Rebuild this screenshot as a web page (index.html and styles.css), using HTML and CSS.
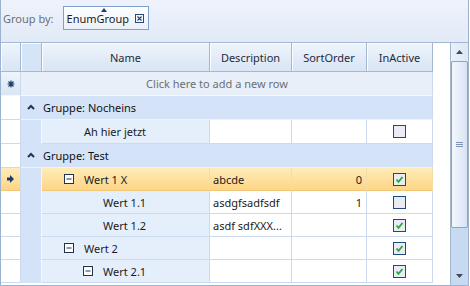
FILE: index.html
```html
<!DOCTYPE html>
<html lang="de">
<head>
  <meta charset="UTF-8">
  <title>Grid</title>
  <link rel="stylesheet" href="styles.css">
</head>
<body>
  <div class="grid-view">
    <!-- Group by Leiste -->
    <div class="group-panel">
      <span class="group-label">Group by:</span>
      <div class="group-chip">
        <svg class="sort-arrow" width="6" height="4" viewBox="0 0 6 4"><polygon points="0,4 3,0 6,4" fill="#1d3d6e"/></svg>
        <span>EnumGroup</span>
        <svg class="chip-close" width="9" height="9" viewBox="0 0 9 9">
          <rect x="0.5" y="0.5" width="8" height="8" fill="#f4f7fb" stroke="#2b4870"/>
          <path d="M2.5 2.5 L6.5 6.5 M6.5 2.5 L2.5 6.5" stroke="#2b4870" stroke-width="1.2"/>
        </svg>
      </div>
    </div>

    <div class="grid-body">
      <div class="rows">
        <div class="row header-row">
          <div class="cell ind"></div>
          <div class="cell indent"></div>
          <div class="cell">Name</div>
          <div class="cell">Description</div>
          <div class="cell">SortOrder</div>
          <div class="cell">InActive</div>
          <div class="cell filler"></div>
        </div>

        <div class="row new-row">
          <div class="cell ind">
            <svg width="8" height="8" viewBox="0 0 8 8"><path d="M4 0.5 V7.5 M0.5 4 H7.5 M1.5 1.5 L6.5 6.5 M6.5 1.5 L1.5 6.5" stroke="#1d3d6e" stroke-width="1.2"/></svg>
          </div>
          <div class="cell new-text">Click here to add a new row</div>
          <div class="cell filler"></div>
        </div>

        <div class="row group-row">
          <div class="cell ind"></div>
          <div class="cell indent"><svg class="caret" width="8" height="6" viewBox="0 0 8 6"><path d="M1 5 L4 2 L7 5" fill="none" stroke="#1d3557" stroke-width="2"/></svg></div>
          <div class="cell group-title">Gruppe: Nocheins</div>
          <div class="cell filler"></div>
        </div>

        <div class="row data-row">
          <div class="cell ind"></div>
          <div class="cell indent"></div>
          <div class="cell name lvl1"><span class="leaf">Ah hier jetzt</span></div>
          <div class="cell desc"></div>
          <div class="cell sort"></div>
          <div class="cell check"><svg class="box" width="13" height="13" viewBox="0 0 13 13"><rect x="0.5" y="0.5" width="12" height="12" fill="#e9ecf2" stroke="#1f4a7c"/></svg></div>
          <div class="cell filler"></div>
        </div>

        <div class="row group-row">
          <div class="cell ind"></div>
          <div class="cell indent"><svg class="caret" width="8" height="6" viewBox="0 0 8 6"><path d="M1 5 L4 2 L7 5" fill="none" stroke="#1d3557" stroke-width="2"/></svg></div>
          <div class="cell group-title">Gruppe: Test</div>
          <div class="cell filler"></div>
        </div>

        <div class="row data-row short selected">
          <div class="cell ind">
            <svg width="7" height="8" viewBox="0 0 7 8"><polygon points="0,2.5 3,2.5 3,0 7,4 3,8 3,5.5 0,5.5" fill="#1b3b6d"/></svg>
          </div>
          <div class="cell indent"></div>
          <div class="cell name lvl1"><svg class="expander" width="10" height="10" viewBox="0 0 10 10"><rect x="0.5" y="0.5" width="9" height="9" fill="#fdfdfd" stroke="#22344d"/><path d="M2.5 5 H7.5" stroke="#22344d"/></svg>Wert 1 X</div>
          <div class="cell desc">abcde</div>
          <div class="cell sort">0</div>
          <div class="cell check"><svg class="box" width="13" height="13" viewBox="0 0 13 13"><rect x="0.5" y="0.5" width="12" height="12" fill="#e9ecf2" stroke="#1f4a7c"/><path d="M3.5 6.5 L5.5 8.8 L9.5 4" fill="none" stroke="#2aa63a" stroke-width="1.8"/></svg></div>
          <div class="cell filler"></div>
        </div>

        <div class="row data-row short">
          <div class="cell ind"></div>
          <div class="cell indent"></div>
          <div class="cell name lvl2"><span class="leaf">Wert 1.1</span></div>
          <div class="cell desc">asdgfsadfsdf</div>
          <div class="cell sort">1</div>
          <div class="cell check"><svg class="box" width="13" height="13" viewBox="0 0 13 13"><rect x="0.5" y="0.5" width="12" height="12" fill="#e9ecf2" stroke="#1f4a7c"/></svg></div>
          <div class="cell filler"></div>
        </div>

        <div class="row data-row short">
          <div class="cell ind"></div>
          <div class="cell indent"></div>
          <div class="cell name lvl2"><span class="leaf">Wert 1.2</span></div>
          <div class="cell desc">asdf sdfXXX...</div>
          <div class="cell sort"></div>
          <div class="cell check"><svg class="box" width="13" height="13" viewBox="0 0 13 13"><rect x="0.5" y="0.5" width="12" height="12" fill="#e9ecf2" stroke="#1f4a7c"/><path d="M3.5 6.5 L5.5 8.8 L9.5 4" fill="none" stroke="#2aa63a" stroke-width="1.8"/></svg></div>
          <div class="cell filler"></div>
        </div>

        <div class="row data-row short">
          <div class="cell ind"></div>
          <div class="cell indent"></div>
          <div class="cell name lvl1"><svg class="expander" width="10" height="10" viewBox="0 0 10 10"><rect x="0.5" y="0.5" width="9" height="9" fill="#fdfdfd" stroke="#22344d"/><path d="M2.5 5 H7.5" stroke="#22344d"/></svg>Wert 2</div>
          <div class="cell desc"></div>
          <div class="cell sort"></div>
          <div class="cell check"><svg class="box" width="13" height="13" viewBox="0 0 13 13"><rect x="0.5" y="0.5" width="12" height="12" fill="#e9ecf2" stroke="#1f4a7c"/><path d="M3.5 6.5 L5.5 8.8 L9.5 4" fill="none" stroke="#2aa63a" stroke-width="1.8"/></svg></div>
          <div class="cell filler"></div>
        </div>

        <div class="row data-row short">
          <div class="cell ind"></div>
          <div class="cell indent"></div>
          <div class="cell name lvl2"><svg class="expander" width="10" height="10" viewBox="0 0 10 10"><rect x="0.5" y="0.5" width="9" height="9" fill="#fdfdfd" stroke="#22344d"/><path d="M2.5 5 H7.5" stroke="#22344d"/></svg>Wert 2.1</div>
          <div class="cell desc"></div>
          <div class="cell sort"></div>
          <div class="cell check"><svg class="box" width="13" height="13" viewBox="0 0 13 13"><rect x="0.5" y="0.5" width="12" height="12" fill="#e9ecf2" stroke="#1f4a7c"/><path d="M3.5 6.5 L5.5 8.8 L9.5 4" fill="none" stroke="#2aa63a" stroke-width="1.8"/></svg></div>
          <div class="cell filler"></div>
        </div>
      </div>

      <!-- Scrollbar -->
      <div class="scrollbar">
        <div class="sb-btn sb-up"><svg width="7" height="4" viewBox="0 0 7 4"><polygon points="0,4 3.5,0 7,4" fill="#3a4b63"/></svg></div>
        <div class="sb-thumb">
          <svg width="7" height="5" viewBox="0 0 7 5"><path d="M0 0.5 H7 M0 2.5 H7 M0 4.5 H7" stroke="#7f94b3"/></svg>
        </div>
        <div class="sb-track"></div>
        <div class="sb-btn sb-down"><svg width="7" height="4" viewBox="0 0 7 4"><polygon points="0,0 3.5,4 7,0" fill="#3a4b63"/></svg></div>
      </div>
    </div>
  </div>
</body>
</html>
```

FILE: styles.css
```css
* {
  margin: 0;
  padding: 0;
  box-sizing: border-box;
}

body {
  margin: 0;
  background: #fff;
  font-family: "Noto Sans", "Liberation Sans", sans-serif;
  font-size: 11px;
  color: #1b1b1b;
}

.grid-view {
  width: 469px;
  height: 286px;
  border: 1px solid #9bb2d1;
  border-top: none;
  display: flex;
  flex-direction: column;
}

/* Group by Leiste */
.group-panel {
  height: 43px;
  flex: none;
  display: flex;
  align-items: flex-start;
  gap: 9px;
  padding: 6px 0 0 2px;
  background: linear-gradient(#eef3fb, #e2eaf7);
  border-bottom: 1px solid #a3b6d0;
}

.group-label {
  margin-top: 6px;
  line-height: 14px;
  color: #6a6f78;
}

.group-chip {
  position: relative;
  height: 24px;
  display: flex;
  align-items: center;
  gap: 6px;
  padding: 0 4px 0 3px;
  border: 1px solid #7fa0cc;
  background: linear-gradient(#fdfeff, #eaf0f9);
  color: #1a1a1a;
}

.sort-arrow {
  position: absolute;
  top: 1px;
  left: 37px;
}

.chip-close {
  display: block;
}

/* Tabelle */
.grid-body {
  flex: 1;
  display: flex;
  min-height: 0;
}

.rows {
  flex: 1;
  background: #fff;
  overflow: hidden;
}

.row {
  display: grid;
  grid-template-columns: 20px 21px 168px 82px 75px 66px 1fr;
  height: 24px;
}

.row.short {
  height: 23px;
}

.cell {
  display: flex;
  align-items: center;
  white-space: nowrap;
  overflow: hidden;
  border-right: 1px solid #cbdaee;
  border-bottom: 1px solid #cbdaee;
}

.cell.filler {
  border: none;
  background: #fff;
}

.header-row {
  height: 29px;
}

.header-row .cell {
  justify-content: center;
  color: #1e2a3c;
  background: linear-gradient(#eef4fb, #d8e5f5);
  border-right: 1px solid #a5b8d1;
  border-bottom: 1px solid #a5b8d1;
  box-shadow: inset 1px 1px 0 #fbfdff;
}

.header-row .indent {
  background: #d6e4f7;
}

.header-row .filler {
  background: #fff;
  border: none;
  box-shadow: none;
}

.ind {
  justify-content: center;
  background: #fff;
}

.new-row .ind {
  background: linear-gradient(#eef4fb, #dae6f5);
  border-bottom-color: #f4f7fc;
}

.new-text {
  grid-column: 2 / 7;
  justify-content: center;
  padding-right: 19px;
  background: #e8eff9;
  color: #6b6f76;
  border-bottom-color: #f4f7fc;
}

.group-row .indent {
  justify-content: center;
  background: #d4e3f8;
  border-right: none;
  border-bottom-color: #eef3fb;
}

.caret {
  margin-right: 2px;
  margin-bottom: 1px;
}

.group-title {
  grid-column: 3 / 7;
  padding-left: 1px;
  background: #d4e3f8;
  color: #111;
  border-bottom-color: #eef3fb;
}

.data-row .indent {
  background: #d4e3f8;
  border-right-color: #f3f7fd;
  border-bottom-color: #d4e3f8;
}

.name {
  background: #e5eefb;
  color: #1b1b1b;
}

.name.lvl1 {
  padding-left: 22px;
}

.name.lvl2 {
  padding-left: 41px;
}

.leaf {
  margin-left: 20px;
}

.expander {
  margin-right: 10px;
  flex: none;
}

.desc {
  padding-left: 3px;
}

.sort {
  justify-content: flex-end;
  padding-right: 4px;
}

.check {
  justify-content: center;
}

.selected .ind,
.selected .name,
.selected .desc,
.selected .sort,
.selected .check {
  background: linear-gradient(#ffecb9, #fdd586);
  border-bottom-color: #f0c777;
  border-right-color: #f6dca6;
}

.selected .ind {
  border-right-color: #cbdaee;
}

/* Scrollbar */
.scrollbar {
  width: 18px;
  flex: none;
  display: flex;
  flex-direction: column;
  border-left: 1px solid #a3b6d0;
  background: #c8daf1;
}

.sb-btn {
  height: 18px;
  flex: none;
  display: flex;
  align-items: center;
  justify-content: center;
}

.sb-up {
  background: linear-gradient(90deg, #eaf1fa, #dde7f5);
}

.sb-thumb {
  height: 167px;
  flex: none;
  display: flex;
  align-items: center;
  justify-content: center;
  border: 1px solid #8ca4c4;
  border-radius: 2px;
  background: linear-gradient(90deg, #f3f7fc, #e4ecf8 60%, #d6e3f4);
}

.sb-track {
  flex: 1;
}
```
